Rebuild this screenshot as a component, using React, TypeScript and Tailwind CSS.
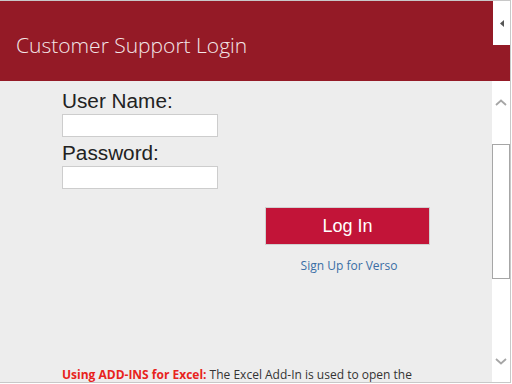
const Chevron = ({ up }: { up?: boolean }) => (
  <svg width="12" height="7" viewBox="0 0 12 7" fill="none">
    <path
      d={up ? "M1 6 L6 1.5 L11 6" : "M1 1 L6 5.5 L11 1"}
      stroke="#a6a6a6"
      strokeWidth="1.8"
    />
  </svg>
)

const App = () => {
  return (
    <div className="h-[384px] w-[512px] overflow-hidden bg-white">
      <div className="flex h-[383px] w-[511px] flex-col border border-l-0 border-[#c8c8c8]">
        {/* header */}
        <header className="flex h-[80px] shrink-0 items-start justify-between bg-[#941a26]">
          <h1 className="pl-4 pt-[29px] font-['Open_Sans',sans-serif] text-[21px] font-light leading-[30px] text-[#f3e6e8]">
            Customer Support Login
          </h1>
          <div className="flex h-[44px] w-[17px] items-center justify-center bg-white">
            <svg width="4" height="7" viewBox="0 0 4 7">
              <path d="M4 0 L0 3.5 L4 7 Z" fill="#555" />
            </svg>
          </div>
        </header>

        <div className="flex min-h-0 flex-1">
          <main className="flex min-w-0 flex-1 flex-col bg-[#ededed] pl-[62px] pt-[9px]">
            <label className="font-['Liberation_Sans',Arial,sans-serif] text-[20.75px] leading-[22px] text-[#222]">
              User Name:
            </label>
            <input className="mt-[2px] h-[23px] w-[156px] border border-[#cdcdcd] bg-white outline-none" />
            <label className="mt-[5px] font-['Liberation_Sans',Arial,sans-serif] text-[20.75px] leading-[22px] text-[#222]">
              Password:
            </label>
            <input
              type="password"
              className="mt-[2px] h-[23px] w-[156px] border border-[#cdcdcd] bg-white outline-none"
            />

            <div className="ml-[203px] mt-[18px] flex w-[165px] flex-col items-center">
              <button className="h-[38px] w-[165px] border border-[#d0d0d0] bg-[#c21438] font-['Liberation_Sans',Arial,sans-serif] text-[18px] text-white">
                Log In
              </button>
              <a className="mt-[13px] pl-[3px] font-['Open_Sans',sans-serif] text-[12px] leading-[16px] text-[#3a6ea5]">
                Sign Up for Verso
              </a>
            </div>

            <p className="mt-[93px] whitespace-nowrap font-['Open_Sans',sans-serif] text-[12px] leading-[16px] text-[#333]">
              <span className="font-bold text-[#e8231c]">Using ADD-INS for Excel:</span> The Excel Add-In is used to open the
            </p>
          </main>

          {/* scrollbar */}
          <aside className="flex w-[18px] shrink-0 flex-col bg-white">
            <div className="flex h-[40px] items-center justify-center pt-[2px]">
              <Chevron up />
            </div>
            <div className="mt-[23px] h-[135px] border border-[#a6a6a6] bg-white" />
            <div className="flex-1" />
            <div className="flex h-[40px] items-center justify-center pb-[2px]">
              <Chevron />
            </div>
          </aside>
        </div>
      </div>
    </div>
  )
}

export default App
